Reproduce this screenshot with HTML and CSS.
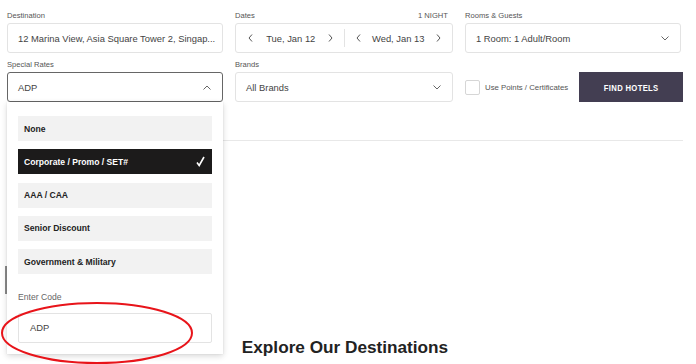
FILE: index.html
```html
<!DOCTYPE html>
<html>
<head>
<meta charset="utf-8">
<link rel="stylesheet" href="styles.css">
</head>
<body>
<div class="page">
  <div class="form">
    <div class="field">
      <div class="label">Destination</div>
      <div class="box"><span class="val">12 Marina View, Asia Square Tower 2, Singap...</span></div>
    </div>
    <div class="field">
      <div class="label label-split"><span>Dates</span><span>1 NIGHT</span></div>
      <div class="box dates">
        <div class="date-half">
          <svg class="arr" width="5" height="8" viewBox="0 0 5 8"><polyline points="4,0.5 1,4 4,7.5" fill="none" stroke="#555" stroke-width="1"/></svg>
          <span class="val">Tue, Jan 12</span>
          <svg class="arr" width="5" height="8" viewBox="0 0 5 8"><polyline points="1,0.5 4,4 1,7.5" fill="none" stroke="#555" stroke-width="1"/></svg>
        </div>
        <div class="date-div"></div>
        <div class="date-half">
          <svg class="arr" width="5" height="8" viewBox="0 0 5 8"><polyline points="4,0.5 1,4 4,7.5" fill="none" stroke="#555" stroke-width="1"/></svg>
          <span class="val">Wed, Jan 13</span>
          <svg class="arr" width="5" height="8" viewBox="0 0 5 8"><polyline points="1,0.5 4,4 1,7.5" fill="none" stroke="#555" stroke-width="1"/></svg>
        </div>
      </div>
    </div>
    <div class="field">
      <div class="label">Rooms &amp; Guests</div>
      <div class="box select rooms"><span class="val">1 Room: 1 Adult/Room</span>
        <svg width="8" height="5" viewBox="0 0 8 5"><polyline points="0.5,0.5 4,4 7.5,0.5" fill="none" stroke="#666" stroke-width="1"/></svg>
      </div>
    </div>

    <div class="field rates">
      <div class="label">Special Rates</div>
      <div class="box select active"><span class="val">ADP</span>
        <svg width="8" height="5" viewBox="0 0 8 5"><polyline points="0.5,4.5 4,1 7.5,4.5" fill="none" stroke="#666" stroke-width="1"/></svg>
      </div>
      <div class="dropdown">
        <div class="opt">None</div>
        <div class="opt sel">Corporate / Promo / SET#
          <svg width="9" height="11" viewBox="0 0 9 11"><polyline points="1,6.5 3.2,9.5 8,1" fill="none" stroke="#fff" stroke-width="1.6"/></svg>
        </div>
        <div class="opt">AAA / CAA</div>
        <div class="opt">Senior Discount</div>
        <div class="opt">Government &amp; Military</div>
        <div class="code-label">Enter Code</div>
        <div class="code-box"><span class="val">ADP</span></div>
      </div>
    </div>
    <div class="field">
      <div class="label">Brands</div>
      <div class="box select"><span class="val">All Brands</span>
        <svg width="8" height="5" viewBox="0 0 8 5"><polyline points="0.5,0.5 4,4 7.5,0.5" fill="none" stroke="#666" stroke-width="1"/></svg>
      </div>
    </div>
    <div class="field">
      <div class="label"></div>
      <div class="actions">
        <label class="check"><span class="cb"></span><span>Use Points / Certificates</span></label>
        <button class="find"><span class="find-text">FIND HOTELS</span></button>
      </div>
    </div>
  </div>
  <div class="sep"></div>
  <div class="content">
    <div class="card-edge"></div>
    <h2 class="title">Explore Our Destinations</h2>
  </div>
</div>
<svg class="circle" width="196" height="64" viewBox="0 0 196 64"><ellipse cx="97" cy="32" rx="95" ry="30" fill="none" stroke="#e8141a" stroke-width="2"/></svg>
</body>
</html>
```
FILE: styles.css
```css
* { box-sizing: border-box; }
html, body { margin: 0; padding: 0; background: #fff; }
body {
  font-family: "Liberation Sans", Arial, sans-serif;
  color: #333;
  width: 696px;
  height: 364px;
  overflow: hidden;
  position: relative;
}
.page { padding: 9px 13px 0 7px; }
.form {
  display: grid;
  grid-template-columns: 216px 218px 218px;
  column-gap: 12px;
  row-gap: 5px;
}
.field { position: relative; }
.label {
  font-size: 7.6px;
  color: #555;
  height: 12px;
  line-height: 13px;
  margin-bottom: 2px;
}
.label-split { display: flex; justify-content: space-between; padding-right: 5px; }
.box {
  height: 30px;
  border: 1px solid #e3e3e3;
  border-radius: 3px;
  display: flex;
  align-items: center;
  padding: 0 10px;
  background: #fff;
}
.val { font-size: 9.4px; color: #444; white-space: nowrap; }
.select { justify-content: space-between; padding: 0 11px 0 10px; }
.rooms { margin-right: 2px; }
.select.active { border-color: #666; }
.dates { padding: 0; }
.date-half {
  flex: 1;
  display: flex;
  align-items: center;
  justify-content: space-between;
  padding: 0 10px 0 12px;
}
.date-half:last-child { padding: 0 11px 0 11px; }
.date-div { width: 1px; height: 18px; background: #e3e3e3; }
.actions {
  display: flex;
  align-items: center;
  justify-content: space-between;
  height: 30px;
}
.check { display: flex; align-items: center; gap: 5px; font-size: 7.8px; color: #555; }
.cb {
  width: 15px; height: 15px;
  border: 1px solid #d6d6d6;
  border-radius: 2px;
  background: #fff;
}
.find {
  width: 104px;
  height: 30px;
  border: 0;
  background: #433e52;
  color: #fff;
  font-family: "Liberation Sans", sans-serif;
  font-weight: bold;
  font-size: 9.6px;
  padding: 0;
}
.find-text { display: inline-block; transform: scaleX(0.8); letter-spacing: 0.4px; }
.dropdown {
  position: absolute;
  left: 0;
  top: 44px;
  width: 216px;
  height: 252px;
  background: #fff;
  box-shadow: 0 2px 6px rgba(0,0,0,0.16), 0 0 1px rgba(0,0,0,0.12);
  padding: 14px 11px 11px;
  z-index: 5;
  display: flex;
  flex-direction: column;
  gap: 8.3px;
}
.opt {
  height: 25px;
  flex: none;
  background: #f2f2f2;
  display: flex;
  align-items: center;
  justify-content: space-between;
  padding: 0 7px 0 6px;
  font-size: 8.6px;
  font-weight: bold;
  color: #222;
}
.opt.sel { background: #1c1b1b; color: #fff; }
.code-label {
  margin-top: 10px;
  font-size: 8.6px;
  color: #666;
  line-height: 10px;
}
.code-box {
  margin-top: 2px;
  height: 30px;
  border: 1px solid #e3e3e3;
  border-radius: 2px;
  display: flex;
  align-items: center;
  padding: 0 11px;
}
.sep { margin-top: 38px; border-top: 1px solid #e8e8e8; }
.content { position: relative; }
.card-edge {
  margin-top: 125px;
  margin-left: -2px;
  width: 160px;
  height: 28px;
  border-left: 2px solid #8a8a8a;
}
.title {
  margin: 43px 0 0;
  text-align: center;
  font-size: 17.2px;
  line-height: 20px;
  font-weight: bold;
  color: #222;
}
.circle { position: absolute; left: 0; top: 301px; z-index: 10; }
```
